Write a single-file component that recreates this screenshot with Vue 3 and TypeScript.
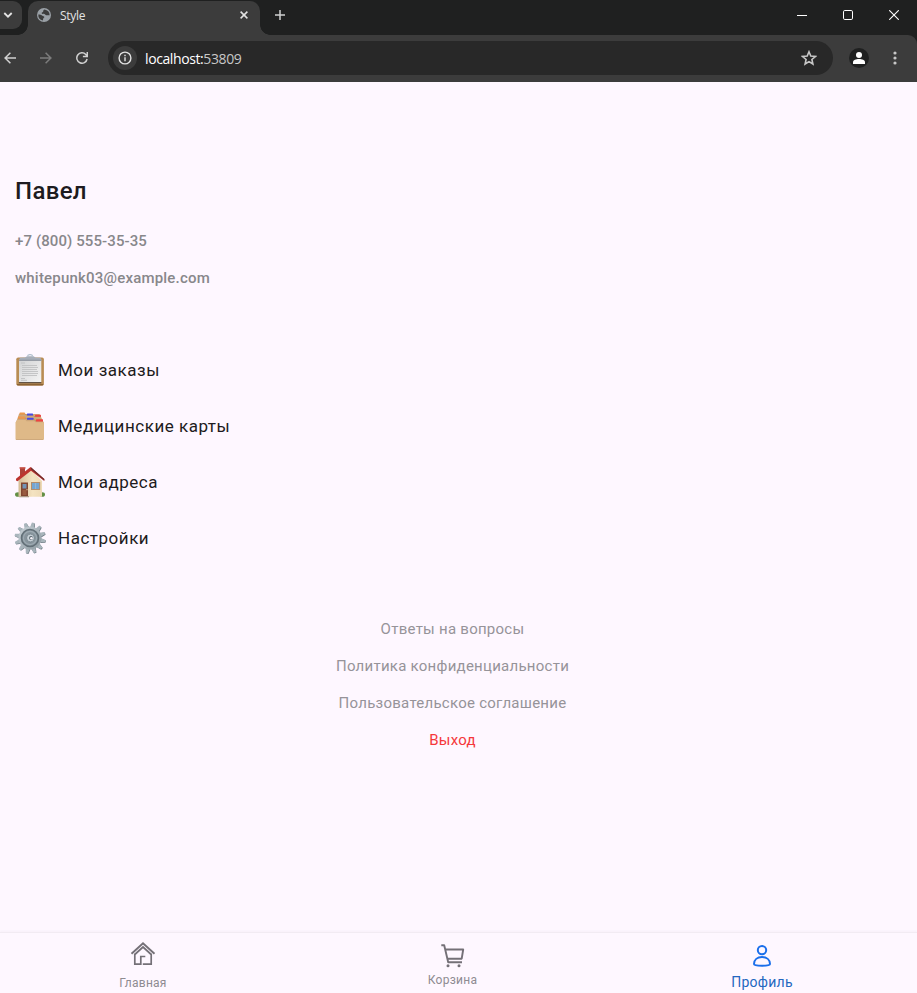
<script setup lang="ts">
type IconName = 'orders' | 'cards' | 'home' | 'settings'

interface MenuItem {
  label: string
  icon: IconName
}

const menu: MenuItem[] = [
  { label: 'Мои заказы', icon: 'orders' },
  { label: 'Медицинские карты', icon: 'cards' },
  { label: 'Мои адреса', icon: 'home' },
  { label: 'Настройки', icon: 'settings' },
]

const links: string[] = ['Ответы на вопросы', 'Политика конфиденциальности', 'Пользовательское соглашение']

const teeth: number[] = Array.from({ length: 12 }, (_, i) => i * 30 + 12)
</script>

<template>
  <div class="window">
    <header class="chrome">
      <div class="tabstrip">
        <div class="tab-search">
          <svg width="10" height="8" viewBox="0 0 10 8"><path d="M1.3 2l3.7 3.7L8.7 2" fill="none" stroke="#e3e3e3" stroke-width="1.8" /></svg>
        </div>
        <div class="tab">
          <svg class="globe" width="14" height="14" viewBox="0 0 14 14">
            <circle cx="7" cy="7" r="7" fill="#9aa0a6" />
            <path d="M7.6 1.4c-.9.4-1.5 1-1.4 1.9.1.8-.5 1-1.2 1.2-.7.3-.2 1.5.5 1.4 1.2-.1 2.2-.2 2.6.6.4.8 1.5.8 2.3.7.8-.1 1.5-.1 2.2.1A5.7 5.7 0 0 0 7.6 1.4zM1.3 6.6c1.4.1 2.8.2 3.7.8 1 .7 2.2.5 2.3 1.5.1.8-.9.9-1.1 1.7-.1.7-.2 1.3-.3 1.9A5.7 5.7 0 0 1 1.3 6.6z" fill="#3c3c3c" />
          </svg>
          <span class="tab-title">Style</span>
          <svg class="tab-close" width="8" height="8" viewBox="0 0 8 8"><path d="M.6.6l6.8 6.8M7.4.6L.6 7.4" stroke="#e3e3e3" stroke-width="1.5" /></svg>
        </div>
        <svg class="plus" width="10" height="10" viewBox="0 0 10 10"><path d="M5 0v10M0 5h10" stroke="#d0d0d0" stroke-width="1.5" /></svg>
        <div class="controls">
          <svg width="10" height="10" viewBox="0 0 10 10"><path d="M0 5.5h10" stroke="#fff" /></svg>
          <svg width="10" height="10" viewBox="0 0 10 10"><rect x=".5" y=".5" width="9" height="9" rx="1.3" fill="none" stroke="#fff" /></svg>
          <svg width="10" height="10" viewBox="0 0 10 10"><path d="M.2.2l9.600 9.600M9.800.200L.200 9.800" stroke="#fff" stroke-width="1.100" /></svg>
        </div>
      </div>
      <div class="toolbar">
        <svg class="back" width="12" height="12" viewBox="0 0 12 12"><path d="M12 6H1.200M6.400.700L1.100 6l5.300 5.300" fill="none" stroke="#d0d0d0" stroke-width="1.500" /></svg>
        <svg class="forward" width="12" height="12" viewBox="0 0 12 12"><path d="M0 6h10.800M5.600.700L10.900 6l-5.300 5.300" fill="none" stroke="#7c7c7c" stroke-width="1.500" /></svg>
        <svg class="reload" width="12" height="12" viewBox="0 0 12 12"><path d="M11.100 7A5.200 5.200 0 1 1 9.800 2.400L11 3.800M11.300 0v4.500H6.900" fill="none" stroke="#d0d0d0" stroke-width="1.500" /></svg>
        <div class="address">
          <span class="info">
            <svg width="14" height="14" viewBox="0 0 14 14"><circle cx="7" cy="7" r="5.900" fill="none" stroke="#e3e3e3" stroke-width="1.400" /><path d="M7 6.200v4M7 3.800v1.400" stroke="#e3e3e3" stroke-width="1.400" /></svg>
          </span>
          <span class="url">localhost:<span class="port">53809</span></span>
          <svg class="star" width="16" height="16" viewBox="0 0 16 16"><path d="M8 1.800l1.800 4.300 4.600.400-3.500 3 1 4.500L8 11.600 4.100 14l1-4.500-3.500-3 4.600-.400z" fill="none" stroke="#c7c7c7" stroke-width="1.600" /></svg>
        </div>
        <svg class="account" width="20" height="20" viewBox="0 0 20 20"><circle cx="10" cy="10" r="10" fill="#1f2020" /><circle cx="10" cy="7" r="3" fill="#fff" /><path d="M4 16v-1.800c0-2.100 3-3.200 6-3.200s6 1.100 6 3.200V16z" fill="#fff" /></svg>
        <svg class="dots" width="4" height="14" viewBox="0 0 4 14"><g fill="#c7c7c7"><circle cx="2" cy="2" r="1.600" /><circle cx="2" cy="7" r="1.600" /><circle cx="2" cy="12" r="1.600" /></g></svg>
      </div>
    </header>

    <main class="page">
      <section class="person">
        <h1>Павел</h1>
        <p class="phone">+7 (800) 555-35-35</p>
        <p class="email">whitepunk03@example.com</p>
      </section>

      <ul class="menu">
        <li v-for="item in menu" :key="item.icon">
          <svg v-if="item.icon === 'orders'" width="32" height="32" viewBox="0 0 32 32">
            <defs><linearGradient id="sheet" x1="0" y1="0" x2="1" y2="1"><stop offset="0" stop-color="#d2d3d4" /><stop offset="1" stop-color="#f4f4f4" /></linearGradient></defs>
            <rect x="2.300" y="3.500" width="27.600" height="28" rx="1.800" fill="#b98c54" />
            <path d="M2.800 30h26.600v.5a1 1 0 0 1-1 1H3.800a1 1 0 0 1-1-1z" fill="#8c6233" />
            <path d="M5 5.500h22.300V28H5z" fill="url(#sheet)" />
            <path d="M4.800 28h22.500v1.300H4.800z" fill="#625345" />
            <path d="M7 9h4M8 11.500h15M8 13.500h16M8 15.500h15M8 17.500h16M8 19.500h16M8 21.500h15M7 24.500h4M7 26.300h6" stroke="#bfc1c2" stroke-width=".9" />
            <path d="M6 3.800l5-.3 2-1.300h6.500l2 1.300 5 .3 1 2.700H5z" fill="#a6adb8" /><path d="M5 6.300h22.500" stroke="#7f858f" stroke-width=".8" />
            <path d="M13.500 2.700c.2-2.800 5-2.800 5.200 0" fill="none" stroke="#b4c2d0" stroke-width="1.300" />
          </svg>
          <svg v-else-if="item.icon === 'cards'" width="32" height="32" viewBox="0 0 32 32">
            <path d="M5 4h20.500l4.500 9H1.800z" fill="#cfa779" />
            <path d="M5.500 4h6l1 1.200h6.500l1 1.300h7M4 8.200h8l1 1h7l1 1.500h8" fill="none" stroke="#b68c5d" stroke-width=".7" />
            <rect x="5.500" y="2.500" width="5.500" height="2" rx=".7" fill="#ee984b" /><rect x="4" y="6.500" width="7" height="2.200" rx=".7" fill="#f0964b" />
            <rect x="13" y="3.500" width="6" height="1.900" rx=".5" fill="#4548e5" /><rect x="13" y="7.700" width="6.500" height="2.100" rx=".5" fill="#4548e5" />
            <rect x="21" y="4.700" width="6" height="2" rx=".5" fill="#ef4241" /><rect x="22" y="9.200" width="7" height="2.200" rx=".5" fill="#ef4241" />
            <path d="M1.500 12.500L3 10h8.500l1 1.200h8l1 1h8.500V29a1 1 0 0 1-1 1H2.500a1 1 0 0 1-1-1z" fill="#dfb988" />
            <path d="M2 29.500h27" stroke="#cda77b" stroke-width=".9" />
          </svg>
          <svg v-else-if="item.icon === 'home'" width="32" height="32" viewBox="0 0 32 32">
            <defs><linearGradient id="wall" x1="0" x2="1"><stop offset="0" stop-color="#d5bd96" /><stop offset=".6" stop-color="#f4e3c1" /><stop offset="1" stop-color="#eddab6" /></linearGradient></defs>
            <ellipse cx="4" cy="28.500" rx="3" ry="2.300" fill="#638f45" /><ellipse cx="28.300" cy="28.500" rx="2.700" ry="2.300" fill="#638f45" />
            <path d="M4.500 14L17 4l11 11v15.800H4.500z" fill="url(#wall)" />
            <path d="M7 30h8v1.300H5z" fill="#ad9985" />
            <path d="M6 1.700h5V7l-5 4.500z" fill="#ad3f37" /><path d="M5.500 1.200h6v1.500h-6z" fill="#c85349" />
            <path d="M2 14.500v-1.700L16.500 1 30.300 13v2L17 4.700 3.500 15.300z" fill="#bd342f" /><path d="M17 1.300L30.300 13v1.500L17 3.300z" fill="#702e2b" />
            <path d="M7 16.500h7V30H7z" fill="#814731" /><path d="M8.500 18h4v4.500h-4z" fill="#7395b6" /><path d="M8.500 24h4v5h-4z" fill="#995b40" /><circle cx="13" cy="23.700" r=".6" fill="#e7d19f" />
            <path d="M17 16h9.200v8H17z" fill="#b48e6a" /><path d="M18 17h7.200v6H18z" fill="#74a5d2" /><path d="M21.600 17v6" stroke="#a0bdd6" stroke-width=".7" />
          </svg>
          <svg v-else width="32" height="32" viewBox="0 0 32 32">
            <defs><linearGradient id="steel" x1="0" y1="0" x2="1" y2="1"><stop offset="0" stop-color="#c8d1d7" /><stop offset="1" stop-color="#8b989f" /></linearGradient></defs>
            <g transform="translate(.5 .5)">
              <path v-for="angle in teeth" :key="`shade-${angle}`" d="M13.800 5.500l1-5h2.300l1.200 5z" :transform="`rotate(${angle} 16 16)`" fill="#69777f" />
            </g>
            <path v-for="angle in teeth" :key="angle" d="M13.800 5.500l.9-5h2.300l1.200 5z" :transform="`rotate(${angle} 16 16)`" fill="#a9b5bc" />
            <circle cx="16" cy="16" r="11.500" fill="url(#steel)" />
            <circle cx="16" cy="16" r="8.500" fill="#87949c" stroke="#626f77" stroke-width="1.600" />
            <circle cx="16" cy="16" r="6.600" fill="none" stroke="#9daab2" stroke-width="1.200" />
            <circle cx="16.500" cy="16" r="3.900" fill="#c6d0d6" stroke="#6c7a83" stroke-width=".7" />
            <circle cx="17" cy="16" r="1.900" fill="#53616a" /><circle cx="17.400" cy="16.200" r="1.300" fill="#f7f2f8" />
          </svg>
          <span>{{ item.label }}</span>
        </li>
      </ul>

      <div class="links">
        <a v-for="link in links" :key="link">{{ link }}</a>
        <a class="exit">Выход</a>
      </div>
    </main>

    <nav class="bottom">
      <a class="nav-home">
        <svg width="26" height="26" viewBox="0 0 26 26"><path d="M1.500 12.800L13 2.300l11.500 10.500" fill="none" stroke="#747077" stroke-width="1.900" /><path d="M4.800 13.500L13 6l8.200 7.500M4.800 12.500v10.700h6v-7.700h4.500M21.200 12.500v10.700h-8.400" fill="none" stroke="#747077" stroke-width="1.700" /></svg>
        <span>Главная</span>
      </a>
      <a class="nav-cart">
        <svg width="26" height="26" viewBox="0 0 26 26"><path d="M1.300 2.200h2.900l4 17h13.800M5 6.500h18.200l-1.500 9.200H7.300" fill="none" stroke="#747077" stroke-width="1.900" stroke-linejoin="round" /><circle cx="8" cy="22.700" r="1.500" fill="#747077" /><circle cx="19" cy="22.700" r="1.500" fill="#747077" /></svg>
        <span>Корзина</span>
      </a>
      <a class="nav-profile">
        <svg width="22" height="24" viewBox="0 0 22 24"><circle cx="11" cy="6.100" r="4.200" fill="none" stroke="#1a6feb" stroke-width="2" /><path d="M3 20c0-4.300 3.400-7 8-7s8 2.700 8 7c0 1.100-3 1.700-8 1.700s-8-.600-8-1.700z" fill="none" stroke="#1a6feb" stroke-width="2" /></svg>
        <span>Профиль</span>
      </a>
    </nav>
  </div>
</template>

<style>
body { margin: 0; background: #fef7ff; }
</style>

<style scoped>
* { box-sizing: border-box; }
svg { display: block; flex: none; }
.window { width: 917px; height: 993px; display: flex; flex-direction: column; overflow: hidden; background: #fef7ff; font-family: Roboto, sans-serif; color: #1d1b20; }

.chrome { height: 82px; flex: none; background: #1f2020; font-family: "Open Sans", "Noto Sans", sans-serif; }
.tabstrip { height: 35px; display: flex; align-items: flex-start; }
.tab-search { width: 22px; height: 28px; margin-top: 1px; padding: 10px 0 0 3px; border-radius: 0 9px 9px 0; background: #3c3c3c; }
.tab { position: relative; width: 232px; height: 34px; margin: 1px 0 0 6px; padding: 0 12px 6px 9px; display: flex; align-items: center; border-radius: 10px 10px 0 0; background: #3c3c3c; }
.tab::before, .tab::after { content: ""; position: absolute; bottom: 0; width: 10px; height: 10px; }
.tab::before { left: -10px; background: radial-gradient(circle at 0 0, transparent 9.5px, #3c3c3c 10px); }
.tab::after { right: -10px; background: radial-gradient(circle at 100% 0, transparent 9.5px, #3c3c3c 10px); }
.tab-title { margin-left: 9px; font-size: 12px; letter-spacing: -0.3px; color: #e3e3e3; }
.tab-close { margin-left: auto; }
.plus { margin: 10px 0 0 15px; }
.controls { margin: 10px 18px 0 auto; display: flex; gap: 36px; }
.toolbar { height: 47px; display: flex; align-items: center; background: #3c3c3c; border-radius: 0 9px 0 0; padding: 0 0 1px 4px; }
.forward { margin-left: 24px; }
.reload { margin-left: 24px; }
.address { width: 725px; height: 34px; margin-left: 20px; padding: 0 16px 0 5px; display: flex; align-items: center; border-radius: 17px; background: #282828; }
.info { width: 24px; height: 24px; display: flex; align-items: center; justify-content: center; border-radius: 50%; background: #3c3c3c; }
.url { margin-left: 8px; font-size: 14px; letter-spacing: -0.4px; color: #fff; }
.port { color: #c7c7c7; }
.star { margin-left: auto; }
.account { margin-left: 16px; }
.dots { margin-left: 24px; }

.page { flex: 1; }
.person { padding: 93px 15px 0; }
h1 { margin: 0; font-size: 24px; line-height: 32px; font-weight: 500; letter-spacing: 0.35px; }
p { margin: 0; font-size: 15px; line-height: 20px; font-weight: 500; color: #88878b; }
.phone { margin-top: 24px; letter-spacing: 0.1px; }
.email { margin-top: 17px; letter-spacing: 0.2px; }
.menu { list-style: none; margin: 54px 0 0; padding: 0 14px; }
.menu li { height: 56px; display: flex; align-items: center; gap: 12px; font-size: 17px; letter-spacing: 0.52px; }
.links { width: 905px; margin-top: 45px; display: flex; flex-direction: column; align-items: center; }
.links a { height: 37px; line-height: 37px; font-size: 15px; letter-spacing: 0.26px; color: #969399; }
.links .exit { color: #f5373b; }

.bottom { width: 917px; height: 61px; flex: none; display: grid; grid-template-columns: 286px 333px 286px; border-top: 1px solid #f2ebf3; box-shadow: 0 -1px 2px rgba(80, 60, 90, 0.04); }
.bottom a { display: flex; flex-direction: column; align-items: center; font-size: 12px; line-height: 16px; letter-spacing: 0.25px; color: #8e8b91; }
.nav-home { padding-top: 8px; }
.nav-home span { margin-top: 8px; }
.nav-cart { padding-top: 10px; }
.nav-cart span { margin-top: 3px; }
.nav-profile { padding-top: 11px; }
.bottom .nav-profile span { font-size: 14px; margin-top: 6px; color: #2467bf; }
</style>
